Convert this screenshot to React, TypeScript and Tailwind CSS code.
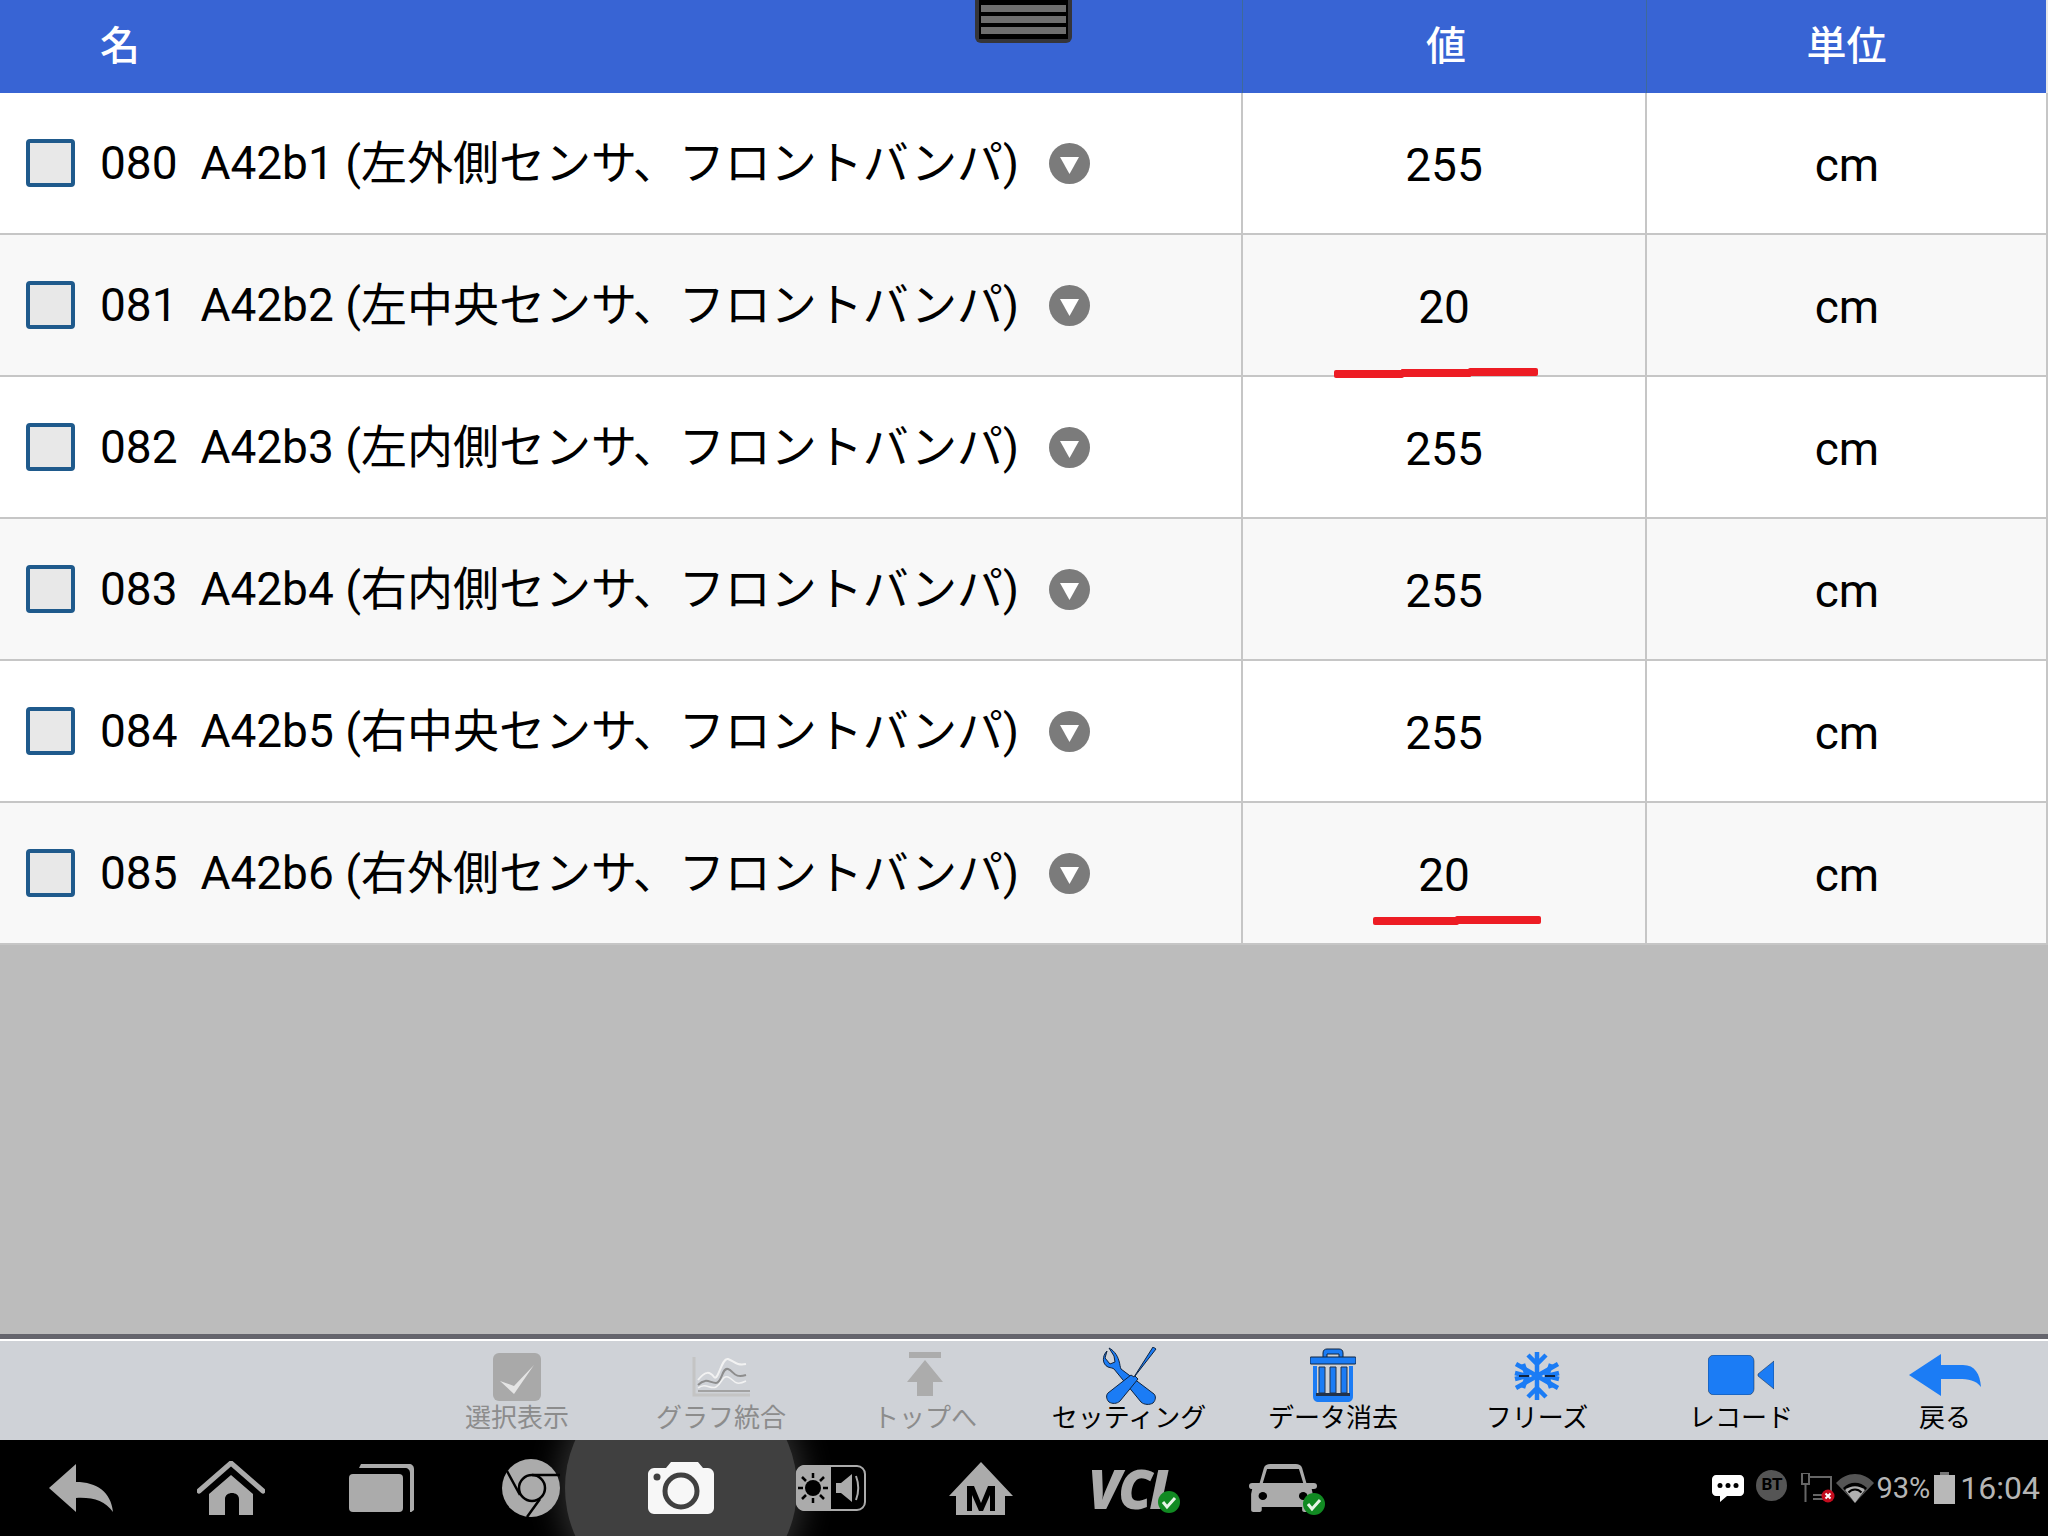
import React from "react";

const rows = [
  { no: "080", id: "A42b1", pos: "左外側", value: "255" },
  { no: "081", id: "A42b2", pos: "左中央", value: "20", mark: "a" },
  { no: "082", id: "A42b3", pos: "左内側", value: "255" },
  { no: "083", id: "A42b4", pos: "右内側", value: "255" },
  { no: "084", id: "A42b5", pos: "右中央", value: "255" },
  { no: "085", id: "A42b6", pos: "右外側", value: "20", mark: "b" },
];

const Snow = () => (
  <svg width="48" height="50" viewBox="0 0 48 50" fill="none" stroke="#1b7cf5" strokeWidth="4.500">
    <path d="M24 1V49M15 4l9 9 9-9M15 46l9-9 9 9" />
    <path d="M3 13l42 24M3 37l42-24" />
    <path d="M2 22l12 3-4-12M46 22l-12 3 4-12M2 28l12-3-4 12M46 28l-12-3 4 12" />
    <path d="M6 25h10M32 25h10" stroke="#10243f" strokeWidth="2" />
  </svg>
);

const tools = [
  {
    label: "選択表示",
    off: true,
    icon: (
      <svg width="48" height="48" viewBox="0 0 48 48">
        <rect width="48" height="48" rx="6" fill="#a9a9a9" />
        <path d="M7 28l14 13L41 12 21 33z" fill="#e4e4e4" />
      </svg>
    ),
  },
  {
    label: "グラフ統合",
    off: true,
    shift: "mb-[4px]",
    icon: (
      <svg className="block" width="58" height="40" viewBox="0 0 58 40" fill="none">
        <path d="M2 0V38H58" stroke="#c4c4c4" strokeWidth="3" />
        <path d="M6 34H58" stroke="#a2a2a2" strokeWidth="2" />
        <path d="M6 23c8-10 12-8 16-3s8-20 14-18 8 7 18 5" stroke="#f2f2f2" strokeWidth="2" />
        <path d="M6 28c8-8 12-2 18-2s6-16 12-14 6 10 18 6" stroke="#8d8d8d" strokeWidth="2" />
        <path d="M6 31c8-6 12 2 18-1s6-12 12-10 6 10 18 4" stroke="#f2f2f2" strokeWidth="1.500" />
      </svg>
    ),
  },
  {
    label: "トップへ",
    off: true,
    shift: "mb-[5px]",
    icon: (
      <svg className="block" width="36" height="44" viewBox="0 0 36 44" fill="#acacac">
        <rect x="2" width="32" height="6" />
        <path d="M18 8L36 30H26V44H10V30H0z" />
      </svg>
    ),
  },
  {
    label: "セッティング",
    shift: "-mb-[4px]",
    icon: (
      <svg className="block" width="58" height="58" viewBox="0 0 58 58" fill="#1b7cf5" stroke="#10243f" strokeWidth="1">
        <path d="M7 4C2 9 2 17 8 20c3 1 5 1 6 2l27 33c3 3 9 3 12 1 3-3 3-7 1-9L21 22c-1-2-1-5-2-8C17 7 13 3 9 1l5 8 1 6-5 2-5-6z" />
        <path d="M53 0l3 2-21 27 3 3-18 22c-3 3-8 3-11 1-3-3-3-7-1-9l23-18 3 2z" />
      </svg>
    ),
  },
  {
    label: "データ消去",
    shift: "-mb-[1px]",
    icon: (
      <svg className="block" width="46" height="54" viewBox="0 0 46 54">
        <path d="M13 10V5c0-3 2-4 4-4h12c2 0 4 1 4 4v5h-4V6H17v4z" fill="#1b7cf5" stroke="#10243f" strokeWidth="1" />
        <rect y="9" width="46" height="7" rx="1" fill="#1b7cf5" stroke="#10243f" strokeWidth="1" />
        <path d="M3 18H43V48c0 4-2 6-6 6H9c-4 0-6-2-6-6z" fill="#1b7cf5" />
        <path d="M7 18h32v27H7z" fill="#cfd2d7" />
        <path d="M9 19h6v26H9zM20 19h6v26h-6zM31 19h6v26h-6z" fill="#1b7cf5" stroke="#22324a" strokeWidth="1" />
        <rect x="6" y="45" width="34" height="3" fill="#22324a" />
      </svg>
    ),
  },
  { label: "フリーズ", icon: <Snow /> },
  {
    label: "レコード",
    shift: "mb-[6px]",
    icon: (
      <svg className="block" width="66" height="40" viewBox="0 0 66 40" fill="#1b7cf5">
        <rect width="46" height="40" rx="6" stroke="#10243f" strokeWidth="0.500" />
        <path d="M50 19L66 6V34L50 21z" stroke="#10243f" strokeWidth="0.500" />
      </svg>
    ),
  },
  {
    label: "戻る",
    shift: "mb-[5px]",
    icon: (
      <svg className="block" width="72" height="42" viewBox="0 0 72 42" fill="#1b7cf5">
        <path d="M32 0V11H54C66 11 71 20 72 33 67 26 59 25 50 25H32V42L0 21z" />
      </svg>
    ),
  },
];

const NavSlot = ({ children }: { children: React.ReactNode }) => (
  <div className="relative z-10 w-[150px] flex justify-center items-center">{children}</div>
);

const Check = () => (
  <svg className="absolute -right-[8px] -bottom-[3px]" width="22" height="22" viewBox="0 0 22 22">
    <circle cx="11" cy="11" r="11" fill="#118a22" />
    <path d="M5 11l4 5 8-9" fill="none" stroke="#e8f5e8" strokeWidth="3" />
  </svg>
);

export default function App() {
  return (
    <div className="w-[2048px] h-[1536px] flex flex-col overflow-hidden bg-[#bcbcbc] font-['Roboto','Noto_Sans_CJK_JP',sans-serif]">
      <div className="relative h-[93px] shrink-0 grid grid-cols-[1242px_404px_400px_2px] bg-[#3864d4] text-white text-[40px] font-medium leading-[93px]">
        <div className="pl-[100px]">名</div>
        <div className="border-l border-[#3e6a9a] text-center pl-[3px]">値</div>
        <div className="border-l border-[#3e6a9a] text-center">単位</div>
        <div className="bg-[#e8e8e8]" />
        <div className="absolute left-[975px] top-0 w-[97px] h-[43px] bg-[#353539] rounded-b-[6px] px-[4px] pb-[4px]">
          <div className="h-full bg-black flex flex-col justify-center gap-[4px] px-[2px]">
            <div className="h-[7px] bg-[#6e6e6e]" />
            <div className="h-[7px] bg-[#6e6e6e]" />
            <div className="h-[7px] bg-[#6e6e6e]" />
          </div>
        </div>
      </div>

      {rows.map((r, i) => (
        <div
          key={r.no}
          className={`h-[142px] shrink-0 grid grid-cols-[1241px_404px_403px] border-b-2 border-[#c6c6c6] text-[46px] text-black ${
            i % 2 ? "bg-[#f8f8f8]" : "bg-white"
          }`}
        >
          <div className="flex items-center pl-[26px]">
            <div className="w-[49px] h-[48px] rounded-[4px] border-4 border-[#1f5a8c] bg-[#e8e8e8]" />
            <div className="ml-[25px] w-[947px] whitespace-pre">
              {r.no}  {r.id} ({r.pos}センサ、フロントバンパ)
            </div>
            <svg className="absolute left-[1049px]" width="41" height="41" viewBox="0 0 41 41">
              <circle cx="20.500" cy="20.500" r="20.500" fill="#7b7b7b" />
              <path d="M11 14H30L20.500 31z" fill="#fff" />
            </svg>
          </div>
          <div className="relative border-l-2 border-[#c6c6c6] flex items-center justify-center pt-[5px]">
            {r.value}
            {r.mark === "a" && (
              <svg className="absolute left-[91px] top-[133px]" width="206" height="10" viewBox="0 0 206 10" fill="#ed1c24">
                <rect x="0" y="2" width="70" height="8" rx="2" />
                <rect x="67" y="1" width="70" height="8" rx="1" />
                <rect x="134" y="0" width="70" height="8" rx="2" />
              </svg>
            )}
            {r.mark === "b" && (
              <svg className="absolute left-[130px] top-[113px]" width="170" height="9" viewBox="0 0 170 9" fill="#ed1c24">
                <rect x="0" y="1" width="86" height="8" rx="2" />
                <rect x="82" y="0" width="86" height="8" rx="2" />
              </svg>
            )}
          </div>
          <div className="border-x-2 border-[#c6c6c6] flex items-center justify-center pt-[5px] pl-[1px]">cm</div>
        </div>
      ))}

      <div className="flex-1" />

      <div className="h-[5px] shrink-0 bg-[#65656d]" />
      <div className="h-[2px] shrink-0 bg-white" />
      <div className="h-[99px] shrink-0 bg-[#cfd2d7] flex justify-end pr-[1px]">
        {tools.map((t) => (
          <div key={t.label} className="w-[204px] flex flex-col items-center">
            <div className="h-[62px] flex items-end pb-[2px]">
              <div className={t.shift}>{t.icon}</div>
            </div>
            <div className={`text-[26px] leading-[30px] ${t.off ? "text-[#8c8c8c]" : "text-black"}`}>{t.label}</div>
          </div>
        ))}
      </div>

      <div className="relative h-[96px] shrink-0 bg-black flex items-center pl-[6px] overflow-hidden">
        <div className="absolute left-[565px] top-[-68px] w-[232px] h-[232px] rounded-full bg-[#404040] shadow-[0_0_32px_6px_#303030]" />
        <NavSlot>
          <svg width="64" height="48" viewBox="0 0 64 48" fill="#ababab">
            <path d="M27 0V18C48 18 62 28 64 48 56 37 44 33 27 34V48L0 24z" />
          </svg>
        </NavSlot>
        <NavSlot>
          <svg width="68" height="54" viewBox="0 0 68 54" fill="#ababab">
            <path d="M2 30L34 2 66 30" fill="none" stroke="#ababab" strokeWidth="5" strokeLinecap="round" />
            <path d="M34 14L56 33V54H42V38c0-8-14-8-14 0V54H12V33z" />
          </svg>
        </NavSlot>
        <NavSlot>
          <svg width="65" height="48" viewBox="0 0 65 48" fill="#ababab">
            <path d="M12 0H60c3 0 5 2 5 5V46l-4 3V9c0-3-2-5-5-5H10z" />
            <rect y="10" width="54" height="38" rx="4" />
          </svg>
        </NavSlot>
        <NavSlot>
          <svg width="58" height="58" viewBox="0 0 58 58">
            <circle cx="29" cy="29" r="29" fill="#ababab" />
            <g fill="none" stroke="#000" strokeWidth="2.500">
              <circle cx="30" cy="29" r="13" />
              <path d="M30 16H58M18 36L5 12M38 40L25 58" />
            </g>
          </svg>
        </NavSlot>
        <NavSlot>
          <svg width="66" height="52" viewBox="0 0 66 52" fill="#f7f7f7">
            <path d="M6 6H18L23 0H50L55 6H60c3 0 6 3 6 6V46c0 3-3 6-6 6H6c-3 0-6-3-6-6V12c0-3 3-6 6-6z" />
            <circle cx="33" cy="29" r="16" fill="none" stroke="#404040" strokeWidth="5" />
            <circle cx="9" cy="15" r="3.500" fill="#404040" />
          </svg>
        </NavSlot>
        <NavSlot>
          <svg width="70" height="46" viewBox="0 0 70 46">
            <rect x="1" y="1" width="68" height="44" rx="8" fill="#000" stroke="#ababab" strokeWidth="2" />
            <path d="M8 0H35V46H8c-4 0-8-4-8-8V8c0-4 4-8 8-8z" fill="#ababab" />
            <circle cx="17" cy="23" r="8" fill="#000" />
            <path d="M17 8v5M17 33v5M2 23h5M27 23h5M6 12l4 4M24 30l4 4M28 12l-4 4M10 30l-4 4" stroke="#000" strokeWidth="2.500" />
            <path d="M40 18h5l11-9V37l-11-9h-5z" fill="#ababab" />
            <path d="M60 11c3 8 3 16 0 24" stroke="#ababab" strokeWidth="2" fill="none" />
          </svg>
        </NavSlot>
        <NavSlot>
          <svg width="64" height="53" viewBox="0 0 64 53" fill="#ababab">
            <path d="M32 0L64 34H56V53H7V34H0z" />
            <path d="M18 49V24h7l7 17 7-17h7v25h-5V33l-7 16h-4l-7-16v16z" fill="#000" />
          </svg>
        </NavSlot>
        <NavSlot>
          <div className="relative -ml-[2px] w-[84px] text-[#ababab] font-['Open_Sans',sans-serif] font-extrabold italic text-[54px] leading-[44px] tracking-[-3px]">
            VCI
            <Check />
          </div>
        </NavSlot>
        <NavSlot>
          <div className="relative ml-[4px]">
            <svg className="block" width="68" height="48" viewBox="0 0 64 48" preserveAspectRatio="none" fill="#ababab">
              <path d="M14 4C15 1 17 0 20 0H44c3 0 5 1 6 4l4 15h7c2 0 3 1 3 3s-1 3-3 3h-2l1 5V46c0 1-1 2-2 2h-6c-1 0-2-1-2-2V43H12v3c0 1-1 2-2 2H4c-1 0-2-1-2-2V30l1-5H2c-1 0-2-1-2-3s1-3 3-3h7zM17 5l-4 14H51L47 5z" fillRule="evenodd" />
              <circle cx="13" cy="32" r="4" fill="#000" />
              <circle cx="51" cy="32" r="4" fill="#000" />
            </svg>
            <Check />
          </div>
        </NavSlot>

        <div className="ml-auto flex items-center pr-[8px] h-full text-[#b5b5b5] font-['Roboto',sans-serif]">
          <svg width="32" height="27" viewBox="0 0 32 27">
            <path d="M4 0H28c2 0 4 2 4 4V17c0 2-2 4-4 4H15l-7 6V21H4c-2 0-4-2-4-4V4C0 2 2 0 4 0z" fill="#fff" />
            <circle cx="8" cy="10.500" r="2.500" fill="#000" />
            <circle cx="16" cy="10.500" r="2.500" fill="#000" />
            <circle cx="24" cy="10.500" r="2.500" fill="#000" />
          </svg>
          <div className="ml-[12px] -mt-[6px] w-[31px] h-[31px] rounded-full bg-[#555] text-black text-[17px] font-bold flex items-center justify-center">BT</div>
          <svg className="ml-[14px]" width="34" height="30" viewBox="0 0 34 30" fill="none" stroke="#666" strokeWidth="2">
            <rect x="1" y="0" width="7" height="11" />
            <path d="M4.500 11V29M8 4H30V22M12 26H24V22H12" />
            <circle cx="27" cy="23" r="6.500" fill="#c40c1e" stroke="none" />
            <path d="M24.500 20.500l5 5M29.500 20.500l-5 5" stroke="#fff" />
          </svg>
          <svg className="ml-[1px]" width="38" height="29" viewBox="0 0 38 29">
            <path d="M0 9C11-3 27-3 38 9L19 29z" fill="#555" />
            <path d="M7 14C14 7 24 7 31 14L19 29z" fill="#000" />
            <path d="M9 16C15 11 23 11 29 16L19 29z" fill="#b0b0b0" />
            <path d="M12.500 18.500C16 14.500 22 14.500 25.500 18.500" stroke="#000" strokeWidth="2" fill="none" />
          </svg>
          <div className="ml-[2px] text-[29px] leading-none">93%</div>
          <svg className="ml-[4px]" width="21" height="32" viewBox="0 0 21 32">
            <rect x="6" width="9" height="3" fill="#777" />
            <rect y="3" width="21" height="29" fill="#b8b8b8" />
          </svg>
          <div className="ml-[5px] text-[32px] leading-none">16:04</div>
        </div>
      </div>
    </div>
  );
}
